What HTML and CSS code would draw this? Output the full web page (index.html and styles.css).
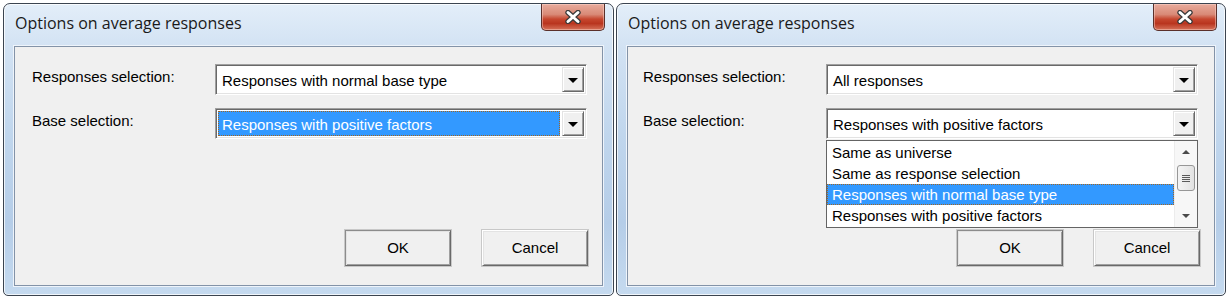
FILE: index.html
```html
<!DOCTYPE html>
<html lang="en">
<head>
    <meta charset="UTF-8">
    <meta name="viewport" content="width=device-width, initial-scale=1.0">
    <title>Options on average responses</title>
    <link rel="stylesheet" href="styles.css">
</head>
<body>

<div class="screen">
    <!-- Dialog 1: combo with focus -->
    <div class="window">
        <div class="titlebar">
            <span class="title">Options on average responses</span>
            <div class="close-btn">
                <svg width="18" height="14" viewBox="0 0 18 14">
                    <path d="M4 2.5 L14 11.5 M14 2.5 L4 11.5" stroke="#3a3a3a" stroke-width="5.4" stroke-linecap="round"/>
                    <path d="M4 2.5 L14 11.5 M14 2.5 L4 11.5" stroke="#ffffff" stroke-width="3" stroke-linecap="round"/>
                </svg>
            </div>
        </div>
        <div class="client">
            <div class="form-row">
                <label>Responses selection:</label>
                <div class="combo">
                    <div class="combo-value">Responses with normal base type</div>
                    <div class="combo-arrow"></div>
                </div>
            </div>
            <div class="form-row">
                <label>Base selection:</label>
                <div class="combo">
                    <div class="combo-value selected">Responses with positive factors</div>
                    <div class="combo-arrow"></div>
                </div>
            </div>
            <div class="buttons">
                <div class="button default">OK</div>
                <div class="button">Cancel</div>
            </div>
        </div>
    </div>

    <!-- Dialog 2: dropdown opened -->
    <div class="window second">
        <div class="titlebar">
            <span class="title">Options on average responses</span>
            <div class="close-btn">
                <svg width="18" height="14" viewBox="0 0 18 14">
                    <path d="M4 2.5 L14 11.5 M14 2.5 L4 11.5" stroke="#3a3a3a" stroke-width="5.4" stroke-linecap="round"/>
                    <path d="M4 2.5 L14 11.5 M14 2.5 L4 11.5" stroke="#ffffff" stroke-width="3" stroke-linecap="round"/>
                </svg>
            </div>
        </div>
        <div class="client">
            <div class="form-row">
                <label>Responses selection:</label>
                <div class="combo">
                    <div class="combo-value">All responses</div>
                    <div class="combo-arrow"></div>
                </div>
            </div>
            <div class="form-row">
                <label>Base selection:</label>
                <div class="combo open">
                    <div class="combo-value">Responses with positive factors</div>
                    <div class="combo-arrow"></div>
                    <div class="dropdown">
                        <ul class="dropdown-items">
                            <li>Same as universe</li>
                            <li>Same as response selection</li>
                            <li class="active">Responses with normal base type</li>
                            <li>Responses with positive factors</li>
                        </ul>
                        <div class="scrollbar">
                            <div class="scroll-up"></div>
                            <div class="scroll-track"><div class="scroll-thumb"></div></div>
                            <div class="scroll-down"></div>
                        </div>
                    </div>
                </div>
            </div>
            <div class="buttons">
                <div class="button default">OK</div>
                <div class="button">Cancel</div>
            </div>
        </div>
    </div>
</div>

</body>
</html>
```

FILE: styles.css
```css
/* Root colors */
:root {
    --face: #f0f0f0;
    --shadow: #a0a0a0;
    --dark-shadow: #696969;
    --light: #e3e3e3;
    --highlight: #3399ff;
    --frame-line: #3b4450;
}

/* General */
body {
    margin: 0;
    background: #ffffff;
    font-family: "Liberation Sans", Arial, sans-serif;
    font-size: 15px;
    color: #000000;
}

.screen {
    display: flex;
    gap: 2px;
    padding: 3px;
}

/* Window frame */
.window {
    width: 609px;
    height: 291px;
    display: flex;
    flex-direction: column;
    border: 1px solid var(--frame-line);
    border-radius: 7px 7px 5px 5px;
    background: linear-gradient(to bottom, #e3eef9 0%, #d2e2f3 15%, #c0d6ed 45%, #b5cde8 75%, #c5daef 100%);
    box-shadow: inset 0 0 0 1px rgba(255, 255, 255, 0.75);
}

.window.second {
    width: 608px;
}

.window.second .client {
    padding-left: 15px;
}

.titlebar {
    height: 42px;
    display: flex;
    justify-content: space-between;
    align-items: flex-start;
    padding-left: 11px;
}

.title {
    font-family: "Open Sans", "Noto Sans", sans-serif;
    font-size: 16px;
    line-height: 22px;
    padding-top: 8px;
    color: #1a1a1a;
}

.close-btn {
    width: 62px;
    height: 26px;
    margin-right: 8px;
    display: flex;
    align-items: center;
    justify-content: center;
    border: 1px solid #5b302a;
    border-top: none;
    border-radius: 0 0 5px 5px;
    background: linear-gradient(to bottom, #e8ab9c 0%, #d98a77 40%, #c6472f 58%, #b9351f 75%, #d6725a 100%);
    box-shadow: inset 0 0 0 1px rgba(255, 220, 210, 0.45);
}

/* Client area */
.client {
    flex: 1;
    margin: 0 10px 9px 10px;
    display: flex;
    flex-direction: column;
    padding: 17px 0 0 17px;
    background: var(--face);
    border: 1px solid #8393a8;
    box-shadow: 0 0 0 1px #eef4fb;
}

.form-row {
    display: flex;
    align-items: flex-start;
    margin-bottom: 13px;
}

.form-row label {
    width: 183px;
    padding-top: 4px;
    line-height: 18px;
}

/* Combo box */
.combo {
    position: relative;
    width: 368px;
    height: 27px;
    display: flex;
    padding: 1px;
    box-sizing: content-box;
    background: #ffffff;
    border-top: 1px solid var(--shadow);
    border-left: 1px solid var(--shadow);
    border-bottom: 1px solid #ffffff;
    border-right: 1px solid #ffffff;
    box-shadow: inset 1px 1px 0 var(--dark-shadow), inset -1px -1px 0 var(--light);
}

.combo-value {
    flex: 1;
    margin: 1px 2px 1px 1px;
    padding: 2px 0 0 3px;
    line-height: 21px;
    border: 1px solid transparent;
    white-space: nowrap;
}

.combo-value.selected {
    background: var(--highlight);
    color: #ffffff;
    border: 1px dotted #a3651f;
}

.combo-arrow {
    width: 20px;
    height: 23px;
    margin: 1px 1px 1px 0;
    background: var(--face);
    border-top: 1px solid var(--light);
    border-left: 1px solid var(--light);
    border-right: 1px solid var(--dark-shadow);
    border-bottom: 1px solid var(--dark-shadow);
    box-shadow: inset 1px 1px 0 #ffffff, inset -1px -1px 0 var(--shadow);
    display: flex;
    align-items: center;
    justify-content: center;
}

.combo-arrow::after {
    content: "";
    border-left: 5px solid transparent;
    border-right: 5px solid transparent;
    border-top: 5px solid #000000;
    margin-top: 1px;
}

/* Opened list */
.dropdown {
    position: absolute;
    top: calc(100% + 2px);
    left: -1px;
    right: -1px;
    height: 86px;
    display: flex;
    background: #ffffff;
    border: 1px solid #646464;
    z-index: 2;
}

.dropdown-items {
    flex: 1;
    list-style: none;
    margin: 0;
    padding: 1px 0 0 0;
}

.dropdown-items li {
    height: 21px;
    line-height: 19px;
    padding-left: 4px;
    border: 1px solid transparent;
    box-sizing: border-box;
    white-space: nowrap;
}

.dropdown-items li.active {
    background: var(--highlight);
    color: #ffffff;
    border: 1px dotted #a3651f;
}

.scrollbar {
    width: 22px;
    display: flex;
    flex-direction: column;
    background: #f7f7f7;
    border-left: 1px solid #ececec;
}

.scroll-up, .scroll-down {
    height: 22px;
    display: flex;
    align-items: center;
    justify-content: center;
}

.scroll-up::after {
    content: "";
    border-left: 4px solid transparent;
    border-right: 4px solid transparent;
    border-bottom: 4px solid #4a4a4a;
}

.scroll-down::after {
    content: "";
    border-left: 4px solid transparent;
    border-right: 4px solid transparent;
    border-top: 4px solid #4a4a4a;
}

.scroll-track {
    flex: 1;
    padding: 2px 2px 0 2px;
}

.scroll-thumb {
    height: 24px;
    border: 1px solid #979797;
    border-radius: 3px;
    background: linear-gradient(to right, #f4f4f4, #e2e2e2);
    display: flex;
    align-items: center;
    justify-content: center;
}

.scroll-thumb::after {
    content: "";
    width: 8px;
    height: 7px;
    background: repeating-linear-gradient(to bottom, #5a5a5a 0 1px, transparent 1px 2px);
}

/* Buttons */
.buttons {
    margin-top: auto;
    display: flex;
    justify-content: flex-end;
    gap: 31px;
    padding: 0 14px 19px 0;
}

.button {
    width: 104px;
    height: 34px;
    line-height: 34px;
    text-align: center;
    background: var(--face);
    border-top: 1px solid #ffffff;
    border-left: 1px solid #ffffff;
    border-right: 1px solid var(--dark-shadow);
    border-bottom: 1px solid var(--dark-shadow);
    box-shadow: inset 1px 1px 0 var(--light), inset -1px -1px 0 var(--shadow), 0 0 0 1px #c8c8c8;
}

.button.default {
    border-top-color: #8c8c8c;
    border-left-color: #8c8c8c;
}
```
